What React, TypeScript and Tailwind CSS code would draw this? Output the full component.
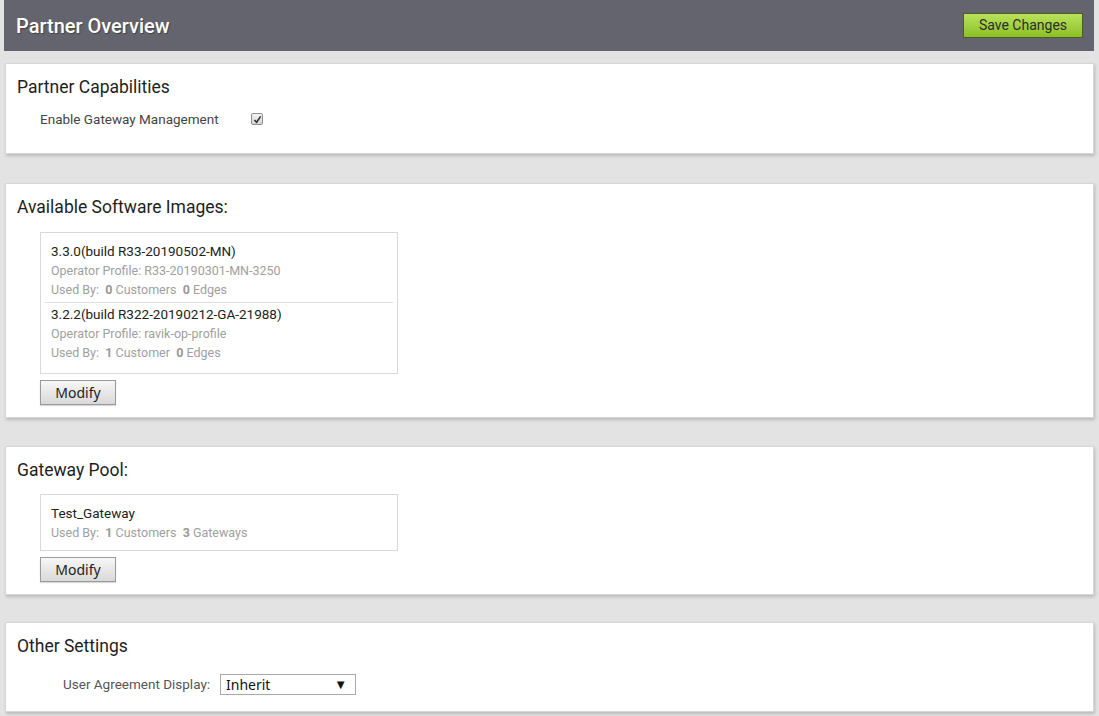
const Panel = ({ title, children, className = "" }: { title: string; children: React.ReactNode; className?: string }) => (
  <div
    className={
      "mx-[5px] bg-white border border-[#d6d6d6] shadow-[1px_2px_3px_rgba(0,0,0,0.18)] px-[11px] pt-[11px] " + className
    }
  >
    <h2 className="text-[17.5px] leading-[24px] text-[#1e1e1e]">{title}</h2>
    {children}
  </div>
);

const ModifyButton = () => (
  <button
    className="mt-[6px] ml-[23px] w-[76px] h-[25px] border border-[#9a9a9a] bg-gradient-to-b from-[#f7f7f7] to-[#d9d9d9]
               shadow-[0_1px_1px_rgba(0,0,0,0.15)] text-[14px] text-[#222] font-['Noto_Sans',sans-serif] leading-none"
  >
    Modify
  </button>
);

const images = [
  { name: "3.3.0(build R33-20190502-MN)", profile: "R33-20190301-MN-3250", customers: "0", custLabel: "Customers", edges: "0" },
  { name: "3.2.2(build R322-20190212-GA-21988)", profile: "ravik-op-profile", customers: "1", custLabel: "Customer", edges: "0" },
];

export default function App() {
  return (
    <div className="min-h-[716px] bg-[#e3e3e3] font-['Roboto',sans-serif] pb-[5px]">
      {/* Header */}
      <div className="ml-[4px] mr-[5px] h-[51px] bg-[#64646e] flex items-center justify-between pl-[12px] pr-[11px]">
        <h1 className="text-[20px] font-medium text-white [text-shadow:1px_1px_1px_rgba(0,0,0,0.35)]">
          Partner Overview
        </h1>
        <button
          className="w-[120px] h-[25px] border border-[#4f5a2a] bg-gradient-to-b from-[#b9e25a] to-[#8cc021]
                     text-[14px] text-[#2d2d2d] leading-none -mt-[1px]"
        >
          Save Changes
        </button>
      </div>

      {/* Partner Capabilities */}
      <Panel title="Partner Capabilities" className="mt-[12px] h-[91px]">
        <div className="flex items-center mt-[10px] ml-[23px] text-[13.5px] text-[#444]">
          <span className="w-[211px]">Enable Gateway Management</span>
          <span className="w-[12px] h-[12px] border border-[#8f8f8f] rounded-[2px] bg-gradient-to-b from-[#f4f4f4] to-[#d4d4d4] flex items-center justify-center">
            <svg width="9" height="9" viewBox="0 0 10 10">
              <path d="M1.5 5.5 L4 8 L8.5 1.5" fill="none" stroke="#333" strokeWidth="1.8" />
            </svg>
          </span>
        </div>
      </Panel>

      {/* Available Software Images */}
      <Panel title="Available Software Images:" className="mt-[29px] pb-[12px]">
        <div className="mt-[13px] ml-[23px] w-[358px] border border-[#d9d9d9] px-[4px] pt-[9px] pb-[11px]">
          {images.map((img, i) => (
            <div
              key={img.name}
              className={"px-[6px] leading-[19px] " + (i === 0 ? "pb-[3px] border-b border-[#dedede]" : "pt-[2px]")}
            >
              <div className="text-[13.5px] text-[#222]">{img.name}</div>
              <div className="text-[12.5px] text-[#a0a0a0]">Operator Profile: {img.profile}</div>
              <div className="text-[12.5px] text-[#a0a0a0]">
                Used By:&nbsp; <span className="font-bold text-[#999]">{img.customers}</span> {img.custLabel}&nbsp;{" "}
                <span className="font-bold text-[#999]">{img.edges}</span> Edges
              </div>
            </div>
          ))}
        </div>
        <ModifyButton />
      </Panel>

      {/* Gateway Pool */}
      <Panel title="Gateway Pool:" className="mt-[28px] pb-[12px]">
        <div className="mt-[12px] ml-[23px] w-[358px] border border-[#d9d9d9] px-[10px] pt-[9px] pb-[8px] leading-[19px]">
          <div className="text-[13.5px] text-[#222]">Test_Gateway</div>
          <div className="text-[12.5px] text-[#a0a0a0]">
            Used By:&nbsp; <span className="font-bold text-[#999]">1</span> Customers&nbsp;{" "}
            <span className="font-bold text-[#999]">3</span> Gateways
          </div>
        </div>
        <ModifyButton />
      </Panel>

      {/* Other Settings */}
      <Panel title="Other Settings" className="mt-[27px] pb-[16px]">
        <div className="flex items-center mt-[16px] ml-[46px] text-[13.5px]">
          <span className="text-[#555] w-[157px]">User Agreement Display:</span>
          <div className="w-[136px] h-[21px] border border-[#a9a9a9] flex items-center justify-between pl-[5px] pr-[8px] font-['Noto_Sans',sans-serif] text-[14px] text-[#111]">
            <span>Inherit</span>
            <span className="text-[13px] leading-none">▼</span>
          </div>
        </div>
      </Panel>
    </div>
  );
}
